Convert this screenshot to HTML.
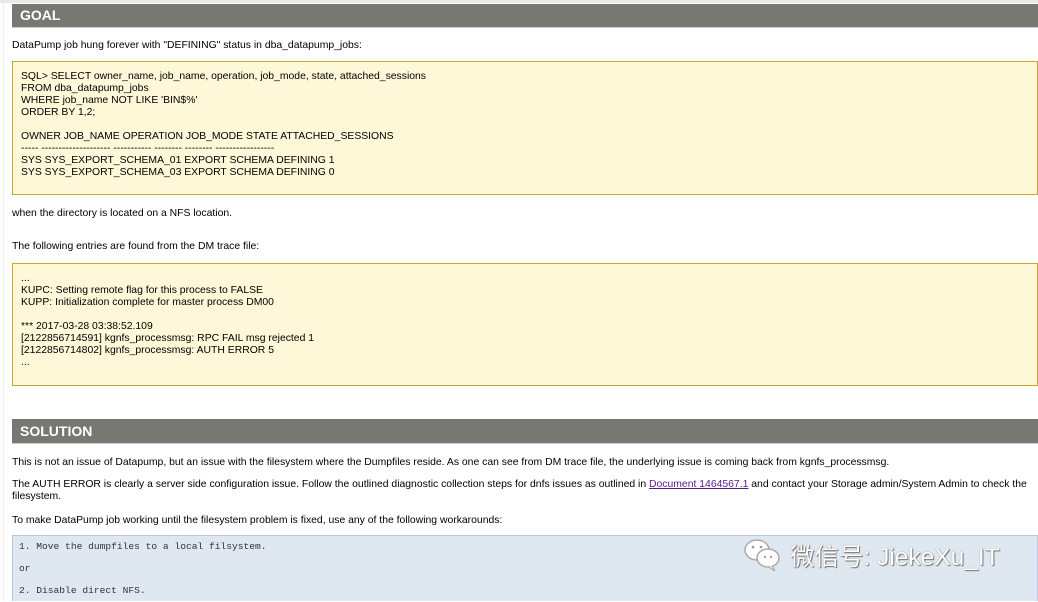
<!DOCTYPE html>
<html><head><meta charset="utf-8"><style>
*{margin:0;padding:0;box-sizing:border-box}
body{width:1038px;height:601px;overflow:hidden;background:#fff;font-family:"Liberation Sans",Arial,sans-serif;font-size:10.4px;color:#000;position:relative}
.a{position:absolute;white-space:nowrap}
.bar{position:absolute;left:12px;width:1026px;background:#787873;color:#fff;font-weight:bold;font-size:14px;padding-left:8px;border-bottom:1px solid #c8cdd8}
.y{position:absolute;left:12px;width:1026px;background:#fef8d8;border:1px solid #c9a82c}
.b{position:absolute;left:12px;width:1026px;background:#dfe8f0;border:1px solid #b8c9e0;border-bottom:none}
.t{line-height:12px}
.m{font-family:"Liberation Mono",monospace;font-size:9.6px;color:#333;line-height:22px}
</style></head><body>
<div style="position:absolute;left:3px;top:0;width:1px;height:601px;background:#eee"></div>
<div style="position:absolute;left:0;top:0;width:1038px;height:3px;background:#e9e9e9"></div>
<div class="bar" style="top:4px;height:24px;line-height:22px">GOAL</div>
<div class="a" style="left:12px;top:40px">DataPump job hung forever with "DEFINING" status in dba_datapump_jobs:</div>
<div class="y" style="top:61px;height:134px"><div class="t" style="position:absolute;left:8px;top:9px">SQL&gt; SELECT owner_name, job_name, operation, job_mode, state, attached_sessions<br>FROM dba_datapump_jobs<br>WHERE job_name NOT LIKE 'BIN$%'<br>ORDER BY 1,2;<br><br>OWNER JOB_NAME OPERATION JOB_MODE STATE ATTACHED_SESSIONS<br>----- -------------------- ----------- -------- -------- -----------------<br>SYS SYS_EXPORT_SCHEMA_01 EXPORT SCHEMA DEFINING 1<br>SYS SYS_EXPORT_SCHEMA_03 EXPORT SCHEMA DEFINING 0</div></div>
<div class="a" style="left:12px;top:208px">when the directory is located on a NFS location.</div>
<div class="a" style="left:12px;top:241px">The following entries are found from the DM trace file:</div>
<div class="y" style="top:263px;height:123px"><div class="t" style="position:absolute;left:8px;top:9px">...<br>KUPC: Setting remote flag for this process to FALSE<br>KUPP: Initialization complete for master process DM00<br><br>*** 2017-03-28 03:38:52.109<br>[2122856714591] kgnfs_processmsg: RPC FAIL msg rejected 1<br>[2122856714802] kgnfs_processmsg: AUTH ERROR 5<br>...</div></div>
<div class="bar" style="top:419px;height:25px;line-height:24px">SOLUTION</div>
<div class="a" style="left:12px;top:457px">This is not an issue of Datapump, but an issue with the filesystem where the Dumpfiles reside. As one can see from DM trace file, the underlying issue is coming back from kgnfs_processmsg.</div>
<div class="a t" style="left:12px;top:479px">The AUTH ERROR is clearly a server side configuration issue. Follow the outlined diagnostic collection steps for dnfs issues as outlined in <span style="color:#551a8b;text-decoration:underline">Document 1464567.1</span> and contact your Storage admin/System Admin to check the<br>filesystem.</div>
<div class="a" style="left:12px;top:515px">To make DataPump job working until the filesystem problem is fixed, use any of the following workarounds:</div>
<div class="b" style="top:535px;height:66px"><div class="m" style="position:absolute;left:6px;top:0">1. Move the dumpfiles to a local filsystem.<br>or<br>2. Disable direct NFS.</div></div>
<svg style="position:absolute;left:742px;top:536px" width="42" height="36" viewBox="0 0 42 36"><ellipse cx="15" cy="14" rx="12" ry="10" fill="#fff" stroke="#aaa" stroke-width="1.5"/><ellipse cx="26" cy="22" rx="11" ry="9" fill="#fff" stroke="#aaa" stroke-width="1.5"/><path d="M30 30 L33 35 L27 31" fill="#fff" stroke="#aaa" stroke-width="1.2"/><circle cx="11" cy="11" r="1.3" fill="#999"/><circle cx="19" cy="11" r="1.3" fill="#999"/><circle cx="23" cy="21" r="1.1" fill="#999"/><circle cx="29" cy="21" r="1.1" fill="#999"/></svg>
<div class="a" style="left:790px;top:538px;font-size:24.5px;color:#fff;font-family:'Liberation Sans','Noto Sans CJK SC',sans-serif;text-shadow:0 0 1px #666,1px 1px 1px #777">微信号: JiekeXu_IT</div>
</body></html>
